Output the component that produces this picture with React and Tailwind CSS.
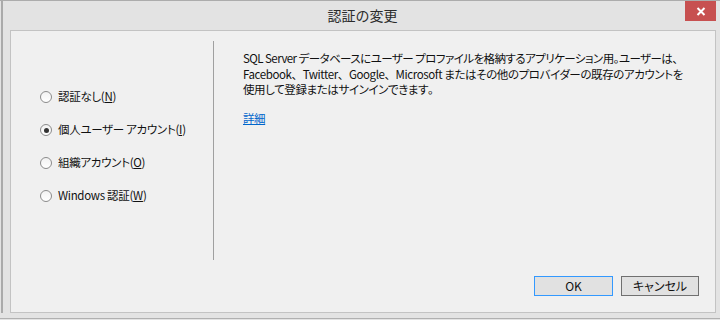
export default function App() {
  const font = { fontFamily: '"Noto Sans CJK JP", "Noto Sans", sans-serif' };
  const radios = [
    { label: "認証なし(", key: "N", end: ")", checked: false },
    { label: "個人ユーザー アカウント(", key: "I", end: ")", checked: true },
    { label: "組織アカウント(", key: "O", end: ")", checked: false },
    { label: "Windows 認証(", key: "W", end: ")", checked: false },
  ];
  const wide = "[font-feature-settings:normal]";
  return (
    <div
      className="relative w-[720px] h-[320px] bg-[#e3e3e3] border-t border-[#acacac] flex flex-col overflow-hidden text-[#111]"
      style={font}
    >
      <div className="flex h-[312px]">
        <div className="w-px shrink-0 bg-[#e3e3e3]" />
        <div className="w-[2px] shrink-0 bg-[#aaaaaa]" />
        <div className="w-[717px] shrink-0 flex flex-col">
          <div className="h-[29px] flex items-center justify-center text-[14px] text-[#2b2b2b]">
            <span className="ml-[2px]">認証の変更</span>
          </div>
          <div className="ml-[7px] w-[706px] h-[283px] border border-[#c3c3c3] bg-[#f0f0f0] flex flex-col">
            <div className="flex h-[230px]">
              <div className="w-[202px] shrink-0 pl-[29px] pt-[56px] flex flex-col gap-[13px] [font-feature-settings:'palt']">
                {radios.map((r, i) => (
                  <div key={i} className="h-[20px] flex items-center gap-[6px] text-[11.5px] tracking-[-0.3px]">
                    <div className="w-[12px] h-[12px] shrink-0 rounded-full border border-[#8b8b8b] bg-gradient-to-b from-[#f2f2f2] to-[#ffffff] flex items-center justify-center">
                      {r.checked && <div className="w-[5px] h-[5px] rounded-full bg-[#333]" />}
                    </div>
                    <span className="whitespace-nowrap">
                      {r.label}
                      <span className="underline">{r.key}</span>
                      {r.end}
                    </span>
                  </div>
                ))}
              </div>
              <div className="w-px shrink-0 bg-[#a0a0a0] mt-[10px] h-[219px]" />
              <div className="flex-1 min-w-0 pl-[29px] pt-[20px] text-[11.5px] leading-[15.5px] tracking-[-0.4px] whitespace-nowrap [font-feature-settings:'palt']">
                <p className="tracking-[-0.55px]">SQL Server データベースにユーザー プロファイルを格納するアプリケーション用。ユーザーは、</p>
                <p>
                  Facebook<span className={wide}>、</span>Twitter<span className={wide}>、</span>Google<span className={wide}>、</span>Microsoft またはその他のプロバイダーの既存のアカウントを
                </p>
                <p>使用して登録またはサインインできます<span className={wide}>。</span></p>
                <p className="mt-[13px] text-[#0066cc] underline">詳細</p>
              </div>
            </div>
            <div className="flex justify-end gap-[8px] pr-[16px] pt-[15px] text-[12px]">
              <div className="w-[79px] h-[20px] border border-[#3399ff] bg-[#e1e1e1] flex items-center justify-center">OK</div>
              <div className="w-[78px] h-[20px] border border-[#707070] bg-[#e1e1e1] flex items-center justify-center [font-feature-settings:'palt']">キャンセル</div>
            </div>
          </div>
        </div>
      </div>
      <div className="h-[5px]" />
      <div className="h-px bg-[#b0b0b0]" />
      <div className="h-px" />
      <div className="absolute left-[685px] top-0 w-[31px] h-[20px] bg-[#c75050] flex items-center justify-center">
        <svg width="10" height="9" viewBox="0 0 10 9">
          <path d="M1.5 1 L8.5 8 M8.5 1 L1.5 8" stroke="#fff" strokeWidth="2" />
        </svg>
      </div>
    </div>
  );
}
